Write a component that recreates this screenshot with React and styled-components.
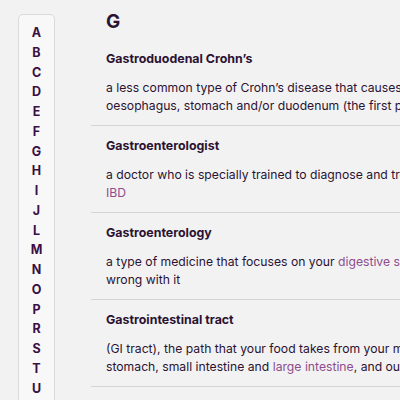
import styled, { createGlobalStyle } from "styled-components";

const GlobalStyle = createGlobalStyle`
  html, body {
    margin: 0;
    padding: 0;
    background: #f2f2f2;
    overflow: hidden;
  }
  body {
    font-family: "Inter", "Liberation Sans", sans-serif;
    color: #2b1233;
  }
`;

const Page = styled.div`
  display: flex;
  align-items: flex-start;
  gap: 36px;
  padding-left: 18px;
  height: 400px;
  overflow: hidden;
`;

const AlphaNav = styled.nav`
  flex: none;
  width: 37px;
  margin-top: 14px;
  box-sizing: border-box;
  background: #f8f8f8;
  border: 1px solid #d9d9de;
  border-radius: 5px;
  padding-top: 8px;
  display: flex;
  flex-direction: column;
  align-items: center;
`;

const Letter = styled.a`
  display: block;
  height: 19.75px;
  line-height: 19.75px;
  font-size: 12.5px;
  font-weight: 700;
  color: #3a0f45;
  text-decoration: none;
`;

const Main = styled.main`
  flex: none;
  width: 700px;
`;

const Heading = styled.h2`
  margin: 10px 0 16px 15px;
  font-size: 19px;
  line-height: 24px;
  font-weight: 700;
  color: #2b1233;
`;

const Entry = styled.div`
  padding: ${(p) => (p.first ? "0" : "11px")} 0 10px 15px;
  border-bottom: 1px solid #d4d4d9;
`;

const Term = styled.h3`
  margin: 0 0 11px;
  font-size: 12.4px;
  line-height: 18px;
  font-weight: 700;
  color: #2b1233;
`;

const Line = styled.span`
  display: block;
  white-space: nowrap;
  font-size: 12.2px;
  line-height: 18px;
  color: #2b1233;
`;

const Link = styled.a`
  color: #8c4d8e;
  text-decoration: none;
`;

const letters = "ABCDEFGHIJLMNOPRSTUVWY".split("");

const entries = [
  {
    term: "Gastroduodenal Crohn’s",
    lines: [
      ["a less common type of Crohn’s disease that causes inflammation in the"],
      ["oesophagus, stomach and/or duodenum (the first part of the small intestine)"],
    ],
  },
  {
    term: "Gastroenterologist",
    lines: [
      ["a doctor who is specially trained to diagnose and treat conditions such as"],
      [{ link: "IBD" }],
    ],
  },
  {
    term: "Gastroenterology",
    lines: [
      ["a type of medicine that focuses on your ", { link: "digestive system" }, " and what can go"],
      ["wrong with it"],
    ],
  },
  {
    term: "Gastrointestinal tract",
    lines: [
      ["(GI tract), the path that your food takes from your mouth, through your oesophagus,"],
      ["stomach, small intestine and ", { link: "large intestine" }, ", and out through your anus"],
    ],
  },
];

export default function App() {
  return (
    <>
      <GlobalStyle />
      <Page>
        <AlphaNav>
          {letters.map((l) => (
            <Letter key={l} href={`#${l}`}>
              {l}
            </Letter>
          ))}
        </AlphaNav>
        <Main>
          <Heading>G</Heading>
          {entries.map((e, i) => (
            <Entry key={e.term} first={i === 0}>
              <Term>{e.term}</Term>
              {e.lines.map((parts, j) => (
                <Line key={j}>
                  {parts.map((p, k) =>
                    typeof p === "string" ? p : <Link key={k} href="#">{p.link}</Link>
                  )}
                </Line>
              ))}
            </Entry>
          ))}
        </Main>
      </Page>
    </>
  );
}
